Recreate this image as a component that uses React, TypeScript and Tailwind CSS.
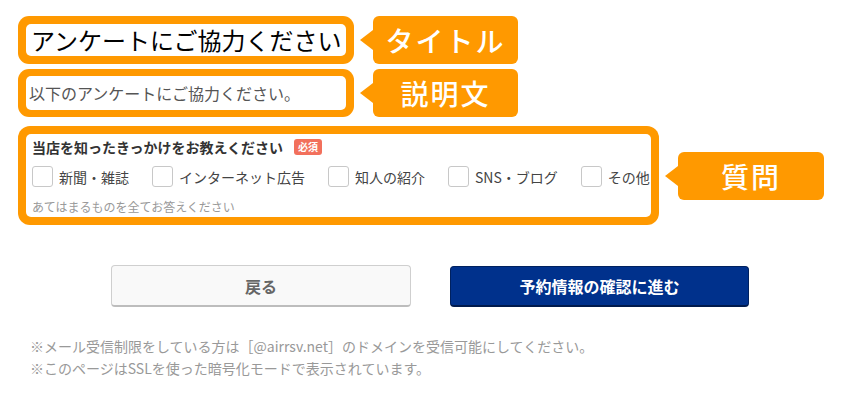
import React from "react";

const Bubble = ({ label, className }: { label: string; className: string }) => (
  <div className={`relative flex items-center justify-center rounded-[6px] bg-[#ff9900] text-white font-medium text-[28px] leading-none ${className}`}>
    <span className="absolute left-[-13px] top-1/2 -translate-y-1/2 w-0 h-0 border-y-[10px] border-y-transparent border-r-[13px] border-r-[#ff9900]" />
    <span className="tracking-[2px]">{label}</span>
  </div>
);

const Check = ({ label }: { label: string }) => (
  <label className="flex shrink-0 items-center gap-[6px] whitespace-nowrap">
    <span className="block shrink-0 w-[21px] h-[21px] rounded-[3px] border border-[#c8c8c8] bg-white" />
    <span className="text-[14px] text-[#444] leading-none">{label}</span>
  </label>
);

export default function App() {
  return (
    <div className="w-[862px] h-[404px] bg-white pl-[18px] pt-[16px] font-['Noto_Sans_CJK_JP','Noto_Sans',sans-serif] overflow-hidden">
      <div className="flex items-center">
        <div className="w-[336px] h-[48px] rounded-[11px] bg-[#ff9900] p-[8px]">
          <div className="h-full rounded-[5px] bg-white flex items-center pl-[5px] text-[24px] text-black leading-none whitespace-nowrap">
            アンケートにご協力ください
          </div>
        </div>
        <Bubble label="タイトル" className="ml-[19px] w-[145px] h-[48px]" />
      </div>

      <div className="flex items-center mt-[5px]">
        <div className="w-[336px] h-[48px] rounded-[11px] bg-[#ff9900] p-[7px] px-[8px]">
          <div className="h-full rounded-[5px] bg-white flex items-center pl-[3px] text-[16px] text-[#555] leading-none whitespace-nowrap">
            以下のアンケートにご協力ください。
          </div>
        </div>
        <Bubble label="説明文" className="ml-[19px] w-[145px] h-[48px]" />
      </div>

      <div className="flex items-center mt-[9px]">
        <div className="w-[641px] rounded-[12px] bg-[#ff9900] p-[8px]">
          <div className="rounded-[5px] bg-white pl-[6px] pt-[3px] pb-[2px]">
            <div className="flex items-center h-[20px]">
              <span className="text-[14px] font-bold text-[#333] leading-none">当店を知ったきっかけをお教えください</span>
              <span className="ml-[11px] flex items-center justify-center h-[16px] px-[4px] rounded-[3px] bg-[#f2705c] text-white text-[10px] font-bold leading-none">必須</span>
            </div>
            <div className="flex items-center mt-[9px] gap-[23px]">
              <Check label="新聞・雑誌" />
              <Check label="インターネット広告" />
              <Check label="知人の紹介" />
              <Check label="SNS・ブログ" />
              <Check label="その他" />
            </div>
            <div className="mt-[12px] h-[16px] flex items-center text-[12px] text-[#999] leading-none">
              あてはまるものを全てお答えください
            </div>
          </div>
        </div>
        <Bubble label="質問" className="ml-[19px] w-[146px] h-[48px]" />
      </div>

      <div className="flex items-start mt-[40px] ml-[93px] gap-[39px]">
        <button className="w-[300px] h-[42px] rounded-[4px] border border-[#cfcfcf] border-b-[2px] border-b-[#bdbdbd] bg-[#f9f9f9] text-[16px] font-bold text-[#666]">
          戻る
        </button>
        <button className="mt-[1px] w-[299px] h-[41px] rounded-[4px] border border-[#00215f] border-b-[2px] border-b-[#001a4d] bg-[#00318c] text-[16px] font-bold text-white">
          予約情報の確認に進む
        </button>
      </div>

      <div className="mt-[28px] ml-[12px] text-[14px] leading-[22px] text-[#999] whitespace-nowrap">
        <p>※メール受信制限をしている方は［@airrsv.net］のドメインを受信可能にしてください。</p>
        <p>※このページはSSLを使った暗号化モードで表示されています。</p>
      </div>
    </div>
  );
}
